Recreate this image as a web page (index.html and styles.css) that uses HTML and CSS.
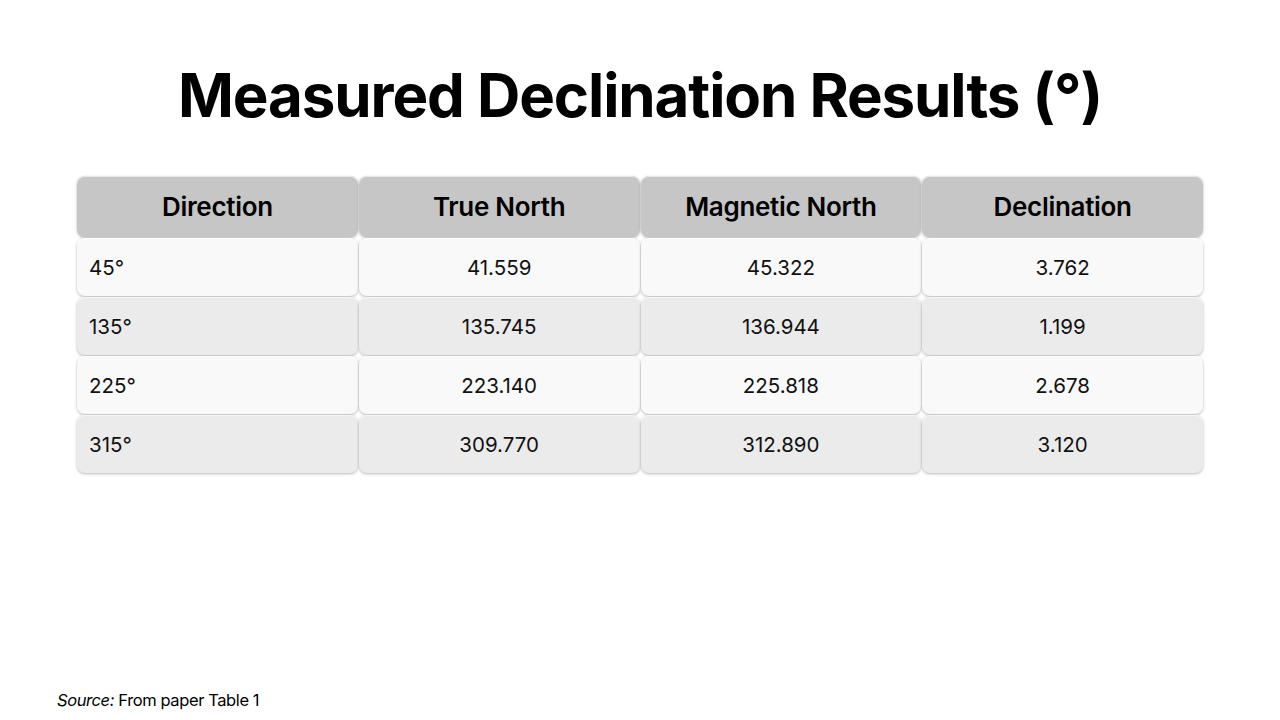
FILE: index.html
```html
<!DOCTYPE html>
<html>
<head>
<meta charset="utf-8">
<link rel="stylesheet" href="styles.css">
</head>
<body>
<div class="slide">
  <h1 class="title">Measured Declination Results (°)</h1>
  <div class="table">
    <div class="cell head">Direction</div>
    <div class="cell head">True North</div>
    <div class="cell head">Magnetic North</div>
    <div class="cell head">Declination</div>

    <div class="cell odd left">45°</div>
    <div class="cell odd">41.559</div>
    <div class="cell odd">45.322</div>
    <div class="cell odd">3.762</div>

    <div class="cell even left">135°</div>
    <div class="cell even">135.745</div>
    <div class="cell even">136.944</div>
    <div class="cell even">1.199</div>

    <div class="cell odd left">225°</div>
    <div class="cell odd">223.140</div>
    <div class="cell odd">225.818</div>
    <div class="cell odd">2.678</div>

    <div class="cell even left">315°</div>
    <div class="cell even">309.770</div>
    <div class="cell even">312.890</div>
    <div class="cell even">3.120</div>
  </div>
  <div class="spacer"></div>
  <p class="source"><em>Source:</em> From paper Table 1</p>
</div>
</body>
</html>
```
FILE: styles.css
```css
html, body {
  margin: 0;
  padding: 0;
  background: #ffffff;
}
.slide {
  width: 1280px;
  height: 720px;
  display: flex;
  flex-direction: column;
  align-items: center;
  font-family: "Inter", "Liberation Sans", sans-serif;
  color: #000;
  box-sizing: border-box;
}
.title {
  margin: 56px 0 0 0;
  font-size: 60px;
  font-weight: 700;
  letter-spacing: -1.1px;
  line-height: 78px;
  text-align: center;
}
.table {
  margin-top: 42px;
  width: 1126px;
  display: grid;
  grid-template-columns: repeat(4, 1fr);
  grid-template-rows: 61px repeat(4, 58px);
  gap: 1px;
}
.cell {
  display: flex;
  align-items: center;
  justify-content: center;
  border-radius: 8px;
  box-shadow: 0 1px 3px rgba(0,0,0,0.28), inset 0 1px 0 rgba(255,255,255,0.6);
  font-size: 20.5px;
  font-weight: 400;
  color: #111;
}
.head {
  background: #c6c6c6;
  font-size: 26px;
  font-weight: 600;
  letter-spacing: -0.3px;
  color: #000;
}
.odd { background: #f9f9f9; }
.even { background: #ebebeb; }
.left {
  justify-content: flex-start;
  padding-left: 12px;
}
.spacer { flex: 1; }
.source {
  align-self: flex-start;
  margin: 0 0 10px 57px;
  font-size: 16.5px;
  letter-spacing: -0.4px;
}
```
